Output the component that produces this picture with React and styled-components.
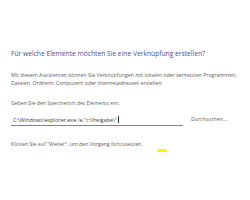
import React from 'react';
import styled, { createGlobalStyle } from 'styled-components';

const GlobalStyle = createGlobalStyle`
  html, body {
    margin: 0;
    padding: 0;
    background: #ffffff;
  }
  body {
    font-family: "Open Sans", "Noto Sans", "Liberation Sans", sans-serif;
  }
`;

const Wizard = styled.div`
  width: 250px;
  height: 200px;
  box-sizing: border-box;
  padding: 49px 0 0 11px;
  display: flex;
  flex-direction: column;
  overflow: hidden;
`;

const Title = styled.h1`
  margin: 0;
  font-size: 6.7px;
  font-weight: 400;
  line-height: 10px;
  color: #4a4c9e;
  white-space: nowrap;
`;

const Text = styled.p`
  margin: ${({ $top }) => $top || 0}px 0 0 0;
  font-size: 5.2px;
  line-height: 8px;
  color: #5e5e5e;
  width: 232px;
`;

const PathRow = styled.div`
  display: flex;
  align-items: flex-end;
  gap: 8px;
  margin-top: 3px;
`;

const PathInput = styled.div`
  width: 172px;
  height: 16px;
  box-sizing: border-box;
  border-bottom: 1px solid #5a8ccc;
  padding: 4px 0 0 2px;
  font-size: 5.4px;
  line-height: 8px;
  color: #3a3a3a;
  display: flex;
  align-items: center;
`;

const Caret = styled.span`
  display: inline-block;
  width: 1px;
  height: 7px;
  background: #333;
  margin-left: 1px;
`;

const BrowseButton = styled.span`
  font-size: 5.2px;
  line-height: 8px;
  color: #5e5e5e;
  margin-bottom: 3px;
`;

const Highlight = styled.div`
  width: 10px;
  height: 3px;
  margin: 1px 0 0 146px;
  border-radius: 5px 5px 0 0;
  background: #fff200;
`;

export default function App() {
  return (
    <>
      <GlobalStyle />
      <Wizard>
        <Title>Für welche Elemente möchten Sie eine Verknüpfung erstellen?</Title>
        <Text $top={12}>
          Mit diesem Assistenten können Sie Verknüpfungen mit lokalen oder vernetzten Programmen,
          Dateien, Ordnern, Computern oder Internetadressen erstellen.
        </Text>
        <Text $top={12}>Geben Sie den Speicherort des Elements ein:</Text>
        <PathRow>
          <PathInput>
            C:\Windows\explorer.exe /e,"c:\freigabe\"
            <Caret />
          </PathInput>
          <BrowseButton>Durchsuchen...</BrowseButton>
        </PathRow>
        <Text $top={14}>Klicken Sie auf "Weiter", um den Vorgang fortzusetzen.</Text>
        <Highlight />
      </Wizard>
    </>
  );
}
